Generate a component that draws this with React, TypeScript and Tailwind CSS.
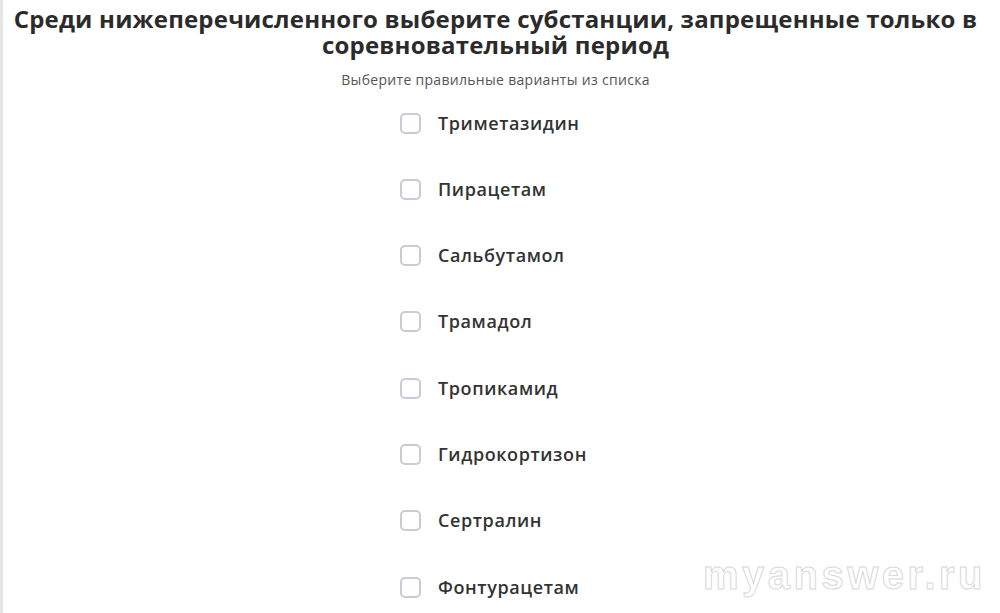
import React from "react";

const items = [
  "Триметазидин",
  "Пирацетам",
  "Сальбутамол",
  "Трамадол",
  "Тропикамид",
  "Гидрокортизон",
  "Сертралин",
  "Фонтурацетам",
];

export default function App() {
  return (
    <div
      className="w-[1000px] h-[613px] bg-white border-l-[3px] border-[#e6e6e6] overflow-hidden relative"
      style={{ fontFamily: "'Open Sans', 'Noto Sans', sans-serif" }}
    >
      <div className="pr-[12px]">
        <h1 className="text-center text-[24px] font-bold text-[#2b2b2b] pt-[6px] tracking-[0.2px]">
          <span className="block leading-[26px] whitespace-nowrap">
            Среди нижеперечисленного выберите субстанции, запрещенные только в
          </span>
          <span className="block leading-[26px]">соревновательный период</span>
        </h1>
        <p className="text-center text-[14px] tracking-[0.3px] text-[#555] mt-[14px] leading-[16px]">
          Выберите правильные варианты из списка
        </p>
      </div>
      <div className="flex flex-col items-start pl-[397px] mt-[25px] gap-[46.3px]">
        {items.map((t) => (
          <div key={t} className="flex items-center gap-[17px] h-[20px]">
            <div className="w-[21px] h-[21px] rounded-[5px] border-2 border-[#c9cbd9]" />
            <span className="text-[18px] tracking-[0.6px] font-semibold text-[#333]">{t}</span>
          </div>
        ))}
      </div>
      <div
        className="absolute right-[14px] bottom-[8px] text-[40px] font-bold text-white tracking-[3.5px]"
        style={{
          fontFamily: "'Liberation Sans', sans-serif",
          WebkitTextStroke: "1px #d8d8d8",
        }}
      >
        myanswer.ru
      </div>
    </div>
  );
}
